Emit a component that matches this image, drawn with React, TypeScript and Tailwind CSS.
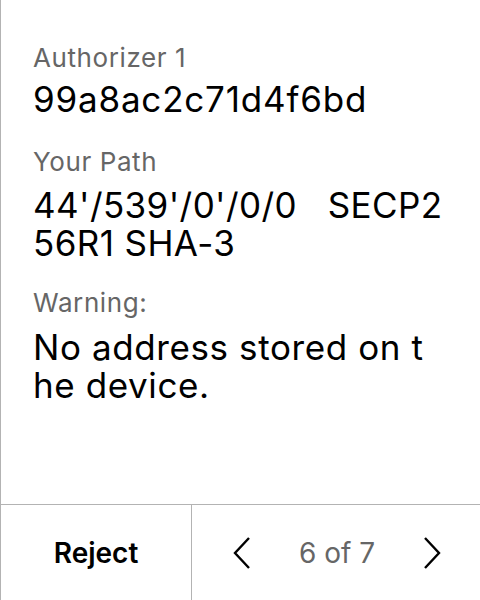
import React from "react";

export default function App() {
  return (
    <div
      className="w-[480px] h-[600px] bg-white flex flex-col border-l border-[#b3b3b3] text-black"
      style={{ fontFamily: "Inter, 'Liberation Sans', sans-serif" }}
    >
      <div className="flex-1 pl-[32px] pr-[20px] pt-[42px]">
        <div className="text-[26px] leading-[32px] tracking-[0.6px] text-[#666666]">Authorizer 1</div>
        <div className="mt-[6px] text-[35px] leading-[38px] tracking-[0.8px] break-all whitespace-pre-wrap">99a8ac2c71d4f6bd</div>
        <div className="mt-[28px] text-[26px] leading-[32px] tracking-[0.6px] text-[#666666]">Your Path</div>
        <div className="mt-[8px] text-[35px] leading-[38px] tracking-[0.4px] break-all whitespace-pre-wrap">{"44'/539'/0'/0/0   SECP2\n56R1 SHA-3"}</div>
        <div className="mt-[25px] text-[26px] leading-[32px] tracking-[0.6px] text-[#666666]">Warning:</div>
        <div className="mt-[9px] text-[35px] leading-[38px] tracking-[0.6px] break-all whitespace-pre-wrap">{"No address stored on t\nhe device."}</div>
      </div>
      <div className="h-[96px] border-t border-[#b3b3b3] flex">
        <div className="w-[191px] border-r border-[#b3b3b3] flex items-center justify-center">
          <span className="text-[28px] font-semibold">Reject</span>
        </div>
        <div className="flex-1 flex items-center justify-between pl-[40px] pr-[38px]">
          <svg width="20" height="34" viewBox="0 0 20 34" fill="none" stroke="black" strokeWidth="2.4">
            <path d="M17 2 L3 17 L17 32" />
          </svg>
          <span className="text-[28px] text-[#666666]">6 of 7</span>
          <svg width="20" height="34" viewBox="0 0 20 34" fill="none" stroke="black" strokeWidth="2.4">
            <path d="M3 2 L17 17 L3 32" />
          </svg>
        </div>
      </div>
    </div>
  );
}
